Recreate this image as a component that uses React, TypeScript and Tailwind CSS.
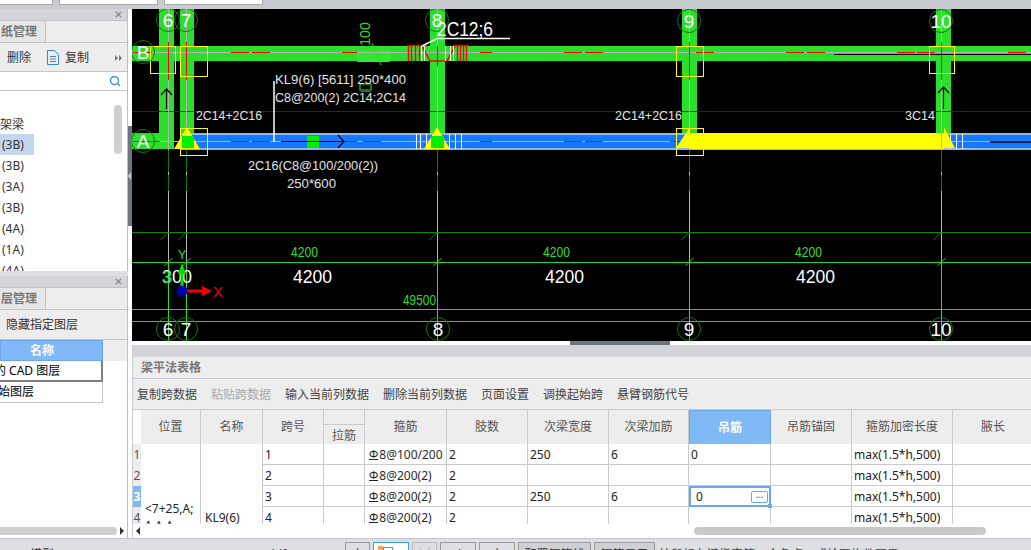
import React from "react";
import { Search, X } from "lucide-react";

const GREEN = "#2bdf2b";
const CAD_FONT = "font-['Liberation_Sans',sans-serif]";

const gridLines = [168.5, 186.5, 437.5, 689.5, 941.5];
const topBubbles = [
  { x: 168, y: 20, t: "6" },
  { x: 186, y: 20, t: "7" },
  { x: 437, y: 20, t: "8" },
  { x: 689, y: 21, t: "9" },
  { x: 941, y: 21, t: "10" },
  { x: 143, y: 52, t: "B" },
  { x: 143, y: 141, t: "A" },
  { x: 168, y: 329, t: "6" },
  { x: 186, y: 329, t: "7" },
  { x: 438, y: 329, t: "8" },
  { x: 689, y: 329, t: "9" },
  { x: 941, y: 329, t: "10" },
];
const redB = [[133, 152], [231, 249], [252, 270], [342, 357], [480, 492], [564, 582], [585, 603], [696, 714], [786, 804], [807, 825], [897, 915], [917, 935], [1008, 1026]];
const redA = [[133, 160], [231, 249], [252, 270], [342, 357], [363, 381], [480, 492], [564, 582], [585, 603], [670, 690]];
const yellowBoxes = [
  [150, 46, 25, 27],
  [180, 46, 27, 30],
  [180, 128, 27, 27],
  [676, 46, 27, 30],
  [676, 128, 27, 27],
  [929, 46, 25, 27],
];

function CadLabel({ x, y, len, size = 13, fill = "#e4e4e4", children }: { x: number; y: number; len: number; size?: number; fill?: string; children: React.ReactNode }) {
  return (
    <text x={x} y={y} fontSize={size} fill={fill} textLength={len} lengthAdjust="spacingAndGlyphs">
      {children}
    </text>
  );
}

function CadCanvas() {
  return (
    <svg viewBox="132 9 899 332" className={`block h-[332px] w-[899px] bg-black ${CAD_FONT}`}>
      {/* beams and columns */}
      <rect x="132" y="46" width="899" height="15" fill={GREEN} />
      {[[159, 15, 140], [180, 14, 124], [430, 15, 124], [682, 15, 124], [936, 15, 124]].map(([x, w, h]) => (
        <rect key={x} x={x} y="9" width={w} height={h} fill={GREEN} />
      ))}
      <rect x="132" y="133" width="42" height="16" fill={GREEN} />
      <rect x="172" y="149" width="8" height="1" fill="#000" />
      <rect x="180" y="133" width="851" height="17" fill="#8fb8ea" />
      <rect x="180" y="135" width="851" height="13" fill="#1677ff" />
      <rect x="690" y="133" width="254" height="16" fill="#ffff00" />
      <rect x="357" y="50" width="33" height="12" fill="#2fe82f" />

      {/* axis lines */}
      <line x1="132" x2="1031" y1="111.5" y2="111.5" stroke="#8a0000" />
      <line x1="132" x2="1031" y1="52.5" y2="52.5" stroke="#b4b4b4" />
      <line x1="132" x2="690" y1="141.5" y2="141.5" stroke="#b4b4b4" />
      <line x1="944" x2="1031" y1="141.5" y2="141.5" stroke="#b4b4b4" />
      {gridLines.map((x) => (
        <g key={x}>
          <line x1={x} x2={x} y1="9" y2="262" stroke="#b4b4b4" />
          <line x1={x} x2={x} y1="150" y2="172" stroke="#0b7d0b" />
          <line x1={x} x2={x} y1="175" y2="191" stroke="#0b7d0b" />
          <line x1={x} x2={x} y1="262" y2="341" stroke={GREEN} />
          <line x1={x - 4} x2={x + 4} y1="266" y2="258" stroke="#2bd52b" />
          <line x1={x - 8} x2={x} y1="240" y2="232" stroke="#0b8d0b" />
        </g>
      ))}
      {[[232, "#0b8d0b"], [262, "#2bd52b"], [309, "#2bd52b"], [321, "#2bd52b"]].map(([y, c]) => (
        <line key={y} x1="132" x2="1031" y1={Number(y) + 0.5} y2={Number(y) + 0.5} stroke={String(c)} />
      ))}

      {/* red dashes */}
      {redB.map(([a, b]) => (
        <line key={a} x1={a} x2={b} y1="52.5" y2="52.5" stroke="#ff0000" />
      ))}
      {redA.map(([a, b]) => (
        <line key={a} x1={a} x2={b} y1="141.5" y2="141.5" stroke="#ff0000" />
      ))}
      {[168.5, 186.5, 689.5, 941.5].map((x) => (
        <line key={x} x1={x} x2={x} y1="42" y2="80" stroke="#ff0000" />
      ))}
      <line x1="186.5" x2="186.5" y1="127" y2="148" stroke="#ff0000" />
      <line x1="437.5" x2="437.5" y1="46" y2="66" stroke="#ff0000" />

      {/* hanger bars at axis 8 */}
      <path d="M407 45.5H427M453 45.5H469M422 46L430 61H447L455 46" fill="none" stroke="#ff0000" strokeWidth="1.5" />
      {[408, 411, 415, 419, 457, 460, 463, 466].map((x) => (
        <line key={x} x1={x + 0.5} x2={x + 0.5} y1="46" y2="61" stroke="#ff0000" strokeWidth="1.4" />
      ))}
      {[421, 424, 445, 450, 453].map((x) => (
        <line key={x} x1={x + 0.5} x2={x + 0.5} y1="46" y2="61" stroke="#fff" />
      ))}
      {[416, 420, 426, 449, 455, 461, 950, 956, 962].map((x) => (
        <line key={x} x1={x + 0.5} x2={x + 0.5} y1="134" y2="149" stroke="#fff" />
      ))}
      <path d="M422 46L437 38.5H510" fill="none" stroke="#fff" strokeWidth="1.5" />
      <line x1="834" x2="1031" y1="54.5" y2="54.5" stroke="#000" />
      <line x1="990" x2="1031" y1="142" y2="142" stroke="#000" strokeWidth="1.5" />

      {/* supports */}
      <path d="M187 127L200 149H174Z M437 127L450 149H424Z M690 127V148H676Z M944 127L955 148H944Z" fill="#ffff00" />
      <rect x="182" y="136" width="12" height="12" fill="#00ee00" />
      <rect x="431" y="136" width="13" height="12" fill="#00ee00" />
      <rect x="307" y="136" width="12" height="12" fill="#00ee00" />
      {yellowBoxes.map(([x, y, w, h]) => (
        <rect key={`${x}-${y}`} x={x + 0.5} y={y + 0.5} width={w} height={h} fill="none" stroke="#ffff00" />
      ))}

      {/* direction arrows */}
      <path d="M281 141.5H344M338 135L344 141.5L338 148" fill="none" stroke="#000" strokeWidth="1.2" />
      <path d="M166.5 109V89M161 95L166.5 89L172 95" fill="none" stroke="#000" strokeWidth="1.2" />
      <path d="M943.5 109V87M938 93L943.5 87L949 93" fill="none" stroke="#000" strokeWidth="1.2" />

      {/* axis bubbles */}
      {topBubbles.map((b) => (
        <g key={`${b.t}-${b.y}`}>
          <circle cx={b.x} cy={b.y} r="11.5" fill="none" stroke="#0b7d0b" />
          <text x={b.x} y={b.y + 7} fontSize="19" fill="#fff" textAnchor="middle">
            {b.t}
          </text>
        </g>
      ))}

      {/* notes */}
      <line x1="274" x2="274" y1="81" y2="142" stroke="#fff" strokeWidth="1.5" />
      <line x1="372" x2="381" y1="43" y2="65" stroke={GREEN} />
      <rect x="360" y="84" width="11" height="6" fill="none" stroke={GREEN} />
      <rect x="361" y="91" width="10" height="1" fill="#d000d0" />
      <text x="0" y="0" fontSize="14" fill={GREEN} textAnchor="middle" transform="translate(370 34) rotate(-90)">
        100
      </text>
      <CadLabel x={437} y={36} len={56} size={20} fill="#fff">2C12;6</CadLabel>
      <CadLabel x={275} y={84} len={131}>KL9(6) [5611] 250*400</CadLabel>
      <CadLabel x={275} y={102} len={131}>C8@200(2) 2C14;2C14</CadLabel>
      <CadLabel x={196} y={120} len={66}>2C14+2C16</CadLabel>
      <CadLabel x={248} y={170} len={130}>2C16(C8@100/200(2))</CadLabel>
      <CadLabel x={287} y={188} len={49}>250*600</CadLabel>
      <CadLabel x={615} y={120} len={67}>2C14+2C16</CadLabel>
      <CadLabel x={905} y={120} len={30}>3C14</CadLabel>

      {/* dimensions */}
      {[291, 543, 795, 1047].map((x) => (
        <CadLabel key={x} x={x} y={257} len={27} size={15} fill={GREEN}>4200</CadLabel>
      ))}
      {[293, 545, 796, 1048].map((x) => (
        <CadLabel key={x} x={x} y={283} len={39} size={19} fill="#fff">4200</CadLabel>
      ))}
      <CadLabel x={162} y={283} len={30} size={19} fill="#fff">300</CadLabel>
      <CadLabel x={162} y={283} len={10} size={17} fill={GREEN}>3</CadLabel>
      <CadLabel x={403} y={305} len={33} size={15} fill={GREEN}>49500</CadLabel>

      {/* ucs icon */}
      <path d="M182 263L186 274H183.5V291H180.5V274H178Z" fill="#00e000" />
      <path d="M182 289.5H202V286L212 291L202 296V292.5H182Z" fill="#f00000" />
      <circle cx="182" cy="291" r="5.5" fill="#0000b0" />
      <text x="182" y="259" fontSize="13" fill={GREEN} textAnchor="middle">Y</text>
      <text x="218" y="297" fontSize="15" fill="#f00000" textAnchor="middle">X</text>
    </svg>
  );
}

function PanelHead({ children }: { children: React.ReactNode }) {
  return (
    <>
      <div className="flex h-[11px] shrink-0 items-center justify-end bg-[#d3d5da] pr-[4px]">
        <X size={9} strokeWidth={3.5} className="text-[#8a8a8a]" />
      </div>
      <div className="flex h-[23px] shrink-0 border-y border-[#c4c5c9] bg-[#ededed]">
        <div className="flex w-[46px] items-center justify-end border-r border-[#c4c5c9] bg-[#e6e6e6] pr-[8px] whitespace-nowrap text-[12px] font-bold text-[#777]">
          {children}
        </div>
      </div>
    </>
  );
}

function SidePanels() {
  const beams = ["(3B)", "(3B)", "(3A)", "(3B)", "(4A)", "(1A)", "(4A)"];
  return (
    <div className="flex w-[128px] shrink-0 flex-col overflow-hidden text-[12px] text-[#333]">
      {/* drawing list panel */}
      <div className="flex h-[262px] flex-col overflow-hidden border-r border-[#bdbdc2] bg-white">
        <PanelHead>纸管理</PanelHead>
        <div className="flex h-[29px] shrink-0 items-center border-b border-[#c4c5c9] bg-[#ededed] pl-[7px] pr-[3px] pt-[1px]">
          <span>删除</span>
          <svg width="12" height="15" viewBox="0 0 12 15" className="ml-[16px]" fill="none" stroke="#3f86c8">
            <path d="M.5.5H7.5L11.5 4.5V14.5H.5Z" />
            <path d="M3 6.5H9M3 9H9M3 11.5H9" />
          </svg>
          <span className="ml-[6px]">复制</span>
          <svg width="7" height="6" viewBox="0 0 7 6" className="ml-auto mr-[2px]" fill="#777">
            <path d="M0 0L3 3L0 6ZM4 0L7 3L4 6Z" />
          </svg>
        </div>
        <div className="flex h-[19px] shrink-0 items-center justify-end border-b border-[#c4c5c9] pr-[6px]">
          <Search size={12} strokeWidth={2.5} className="text-[#2f86c7]" />
        </div>
        <div className="relative flex-1 overflow-hidden">
          <div className="mt-[22px] h-[21px] pt-[1px] leading-[21px]">架梁</div>
          {beams.map((b, i) => (
            <div key={i} className={`h-[21px] w-[34px] pl-[2px] leading-[21px] ${i === 0 ? "bg-[#c5d7ef]" : ""}`}>
              {b}
            </div>
          ))}
          <div className="absolute right-[5px] top-[14px] h-[49px] w-[8px] rounded-full bg-[#cfcfcf]" />
        </div>
      </div>

      <div className="h-[5px] shrink-0 bg-[#dedfe3]" />

      {/* layer panel */}
      <div className="flex h-[262px] flex-col overflow-hidden border-r border-[#bdbdc2] bg-white">
        <PanelHead>层管理</PanelHead>
        <div className="flex h-[30px] shrink-0 items-center border-b border-[#c4c5c9] bg-[#ededed] pl-[6px]">隐藏指定图层</div>
        <div className="h-[21px] shrink-0 bg-[#ededed]">
          <div className="h-[21px] w-[103px] border border-[#6aa6e8] bg-[#7fb9f8] pr-[48px] text-right font-bold leading-[19px] text-white">名称</div>
        </div>
        <div className="flex h-[21px] w-[103px] shrink-0 items-center border-r-2 border-b-2 border-[#7f7f7f] whitespace-nowrap text-black">
          <span className="-ml-[6px]">的 CAD 图层</span>
        </div>
        <div className="flex h-[21px] w-[103px] shrink-0 items-center border-r border-b border-[#c4c5c9] whitespace-nowrap text-black">
          <span className="-ml-[2px]">始图层</span>
        </div>
        <div className="mt-auto mb-[3px] flex items-center">
          <div className="h-[8px] w-[117px] rounded-r-full bg-[#cfcfcf]" />
          <div className="ml-[3px] h-0 w-0 border-y-[4px] border-l-[4px] border-y-transparent border-l-[#333]" />
        </div>
      </div>
    </div>
  );
}

const colWidths = "grid-cols-[8px_60px_62px_61px_41px_82px_81px_81px_80px_82px_81px_101px_81px]";
const HEADERS = ["位置", "名称", "跨号", "拉筋", "箍筋", "肢数", "次梁宽度", "次梁加筋", "吊筋", "吊筋锚固", "箍筋加密长度", "腋长"];

type Span = { stirrup: string; width?: string; extra?: string; hanger?: string };
const SPANS: Span[] = [
  { stirrup: "8@100/200", width: "250", extra: "6", hanger: "0" },
  { stirrup: "8@200(2)" },
  { stirrup: "8@200(2)", width: "250", extra: "6", hanger: "0" },
  { stirrup: "8@200(2)" },
];

const cellCls = "flex min-w-0 items-center overflow-hidden whitespace-nowrap border-r border-b border-[#c9cacf] px-[2px] pt-[1px]";

function BeamRows() {
  return (
    <div className={`grid h-[80px] shrink-0 auto-rows-[21px] overflow-hidden ${colWidths}`}>
      {SPANS.map((s, i) => (
        <React.Fragment key={i}>
          <div className={`flex items-center justify-center overflow-hidden text-[12px] ${i === 2 ? "bg-[#7fb9f8] font-bold text-white" : "bg-[#ededed] text-[#555]"}`}>
            {i + 1}
          </div>
          {i === 0 && (
            <>
              <div className="row-span-4 overflow-hidden border-r border-[#c9cacf] pl-[4px] pt-[56px] leading-[17px]">
                &lt;7+25,A;
                <br />
                1 A A
              </div>
              <div className="row-span-4 overflow-hidden border-r border-[#c9cacf] pl-[4px] pt-[65px] leading-[17px]">KL9(6)</div>
            </>
          )}
          <div className={cellCls}>{i + 1}</div>
          <div className={cellCls} />
          <div className={`${cellCls} text-[#2b2b2b]`}>
            <span className="ml-[2px] mr-[1px] inline-block border-b border-[#222] align-[2px] text-[11px] leading-[10px] text-[#222]">Φ</span>
            {s.stirrup}
          </div>
          <div className={cellCls}>2</div>
          <div className={cellCls}>{s.width}</div>
          <div className={cellCls}>{s.extra}</div>
          {i === 2 ? (
            <div className="relative flex items-center border-2 border-[#6aa6e8] pl-[5px] pr-[1px]">
              0
              <span className="ml-auto flex h-[12px] w-[17px] items-center justify-center rounded-[2px] border border-[#6aa6e8] text-[9px] font-bold leading-none text-[#4d8fd6]">
                ···
              </span>
              <span className="absolute -bottom-[3px] -right-[3px] h-[4px] w-[4px] bg-[#6aa6e8]" />
            </div>
          ) : (
            <div className={cellCls}>{s.hanger}</div>
          )}
          <div className={cellCls} />
          <div className={cellCls}>max(1.5*h,500)</div>
          <div className={cellCls} />
        </React.Fragment>
      ))}
    </div>
  );
}

function BeamTable() {
  const tools = ["复制跨数据", "粘贴跨数据", "输入当前列数据", "删除当前列数据", "页面设置", "调换起始跨", "悬臂钢筋代号"];
  return (
    <div className="flex h-[193px] flex-col overflow-hidden border-l border-[#c9cacf] bg-white text-[12px] text-[#222]">
      <div className="h-[12px] shrink-0 bg-[#d3d4d9]" />
      <div className="flex h-[22px] shrink-0 items-center border-b border-[#c9cacf] bg-[#ededed] pl-[8px] pt-[1px] font-bold text-[#777]">梁平法表格</div>
      <div className="flex h-[31px] shrink-0 items-center gap-[14px] border-b border-[#c9cacf] bg-[#ededed] pl-[4px] pt-[1px] text-[#444]">
        {tools.map((t, i) => (
          <span key={t} className={i === 1 ? "text-[#aaa]" : ""}>
            {t}
          </span>
        ))}
      </div>
      <div className={`grid h-[34px] shrink-0 overflow-hidden ${colWidths}`}>
        <div className="bg-white" />
        {HEADERS.map((h) =>
          h === "拉筋" ? (
            <div key={h} className="flex flex-col border-r border-b border-[#c9cacf] bg-[#ededed] text-[#555]">
              <div className="h-[15px] border-b border-[#c9cacf]" />
              <div className="flex-1 pt-[2px] text-center leading-[17px]">{h}</div>
            </div>
          ) : h === "吊筋" ? (
            <div key={h} className="flex items-center justify-center border border-[#6aa6e8] bg-[#7fb9f8] font-bold text-white">
              {h}
            </div>
          ) : (
            <div key={h} className="flex items-center justify-center border-r border-b border-[#c9cacf] bg-[#ededed] text-[#555]">
              {h}
            </div>
          ),
        )}
      </div>
      <BeamRows />
      <div className="flex flex-1 items-center">
        <div className="ml-[3px] h-0 w-0 border-y-[4px] border-r-[4px] border-y-transparent border-r-[#333]" />
        <div className="ml-[554px] h-[8px] w-[292px] rounded-full bg-[#c9c9c9]" />
      </div>
    </div>
  );
}

function StatusBar() {
  const btn = "h-[9px] shrink-0 overflow-hidden border border-b-0 border-[#9a9a9a] text-center text-[12px] leading-[12px] text-[#333]";
  return (
    <div className="flex h-[12px] shrink-0 overflow-hidden border-t border-[#c4c5c9] bg-[#dedfe3] text-[12px] text-[#333]">
      <span className="ml-[30px] mt-[9px] w-[235px] shrink-0 leading-[14px]">模型</span>
      <span className="mt-[9px] w-[80px] shrink-0 leading-[14px]">Shift</span>
      <div className="mt-[3px] flex items-start gap-[3px]">
        <div className={`${btn} w-[25px] pt-[5px]`}>|</div>
        <div className="flex h-[9px] w-[36px] shrink-0 items-start overflow-hidden border border-b-0 border-[#3d9bf0] bg-white pl-[4px] pt-[3px]">
          <span className="h-[6px] w-[5px] bg-[#f7a35c]" />
          <span className="mt-[1px] h-[6px] w-[10px] border border-[#5a8fd0]" />
        </div>
        <div className={`${btn} w-[25px] border-[#bbb] pt-[5px] text-[#999]`}>╳</div>
        <div className={`${btn} w-[36px] pt-[5px]`}>/</div>
        <div className={`${btn} w-[36px] pt-[5px]`}>|</div>
        <div className={`${btn} w-[73px] bg-[#cfd0d3] pt-[6px]`}>配置钢筋线</div>
        <div className={`${btn} w-[61px] bg-[#cfd0d3] pt-[6px]`}>钢筋显示</div>
      </div>
      <span className="ml-[4px] mt-[9px] whitespace-nowrap leading-[14px] text-[#444]">按鼠标左键指定第一个角点，或拾取构件图元</span>
    </div>
  );
}

export default function App() {
  return (
    <div className="flex h-[550px] w-[1031px] flex-col overflow-hidden bg-[#dedfe3] font-['Noto_Sans','Noto_Sans_CJK_SC',sans-serif]">
      {/* top strip with cut off inputs */}
      <div className="flex h-[9px] shrink-0 items-start gap-[6px] bg-[#c8cbd0]">
        <div className="h-[5px] w-[53px] border-r border-b border-[#aaa] bg-white" />
        <div className="h-[5px] w-[99px] border-x border-b border-[#aaa] bg-white" />
        <div className="h-[5px] w-[99px] border-x border-b border-[#aaa] bg-white" />
      </div>

      <div className="flex h-[529px] shrink-0">
        <SidePanels />
        <div className="w-[4px] shrink-0 bg-white">
          <div className="mt-[117px] flex h-[100px] items-center bg-[#6b7680]">
            <div className="h-0 w-0 border-y-[4px] border-r-[3px] border-y-transparent border-r-[#c8ccd0]" />
          </div>
        </div>
        <div className="flex w-[899px] flex-col">
          <CadCanvas />
          <div className="h-[4px] shrink-0 bg-white pl-[438px]">
            <div className="h-[4px] w-[100px] bg-[#6b7680]" />
          </div>
          <BeamTable />
        </div>
      </div>

      <StatusBar />
    </div>
  );
}
